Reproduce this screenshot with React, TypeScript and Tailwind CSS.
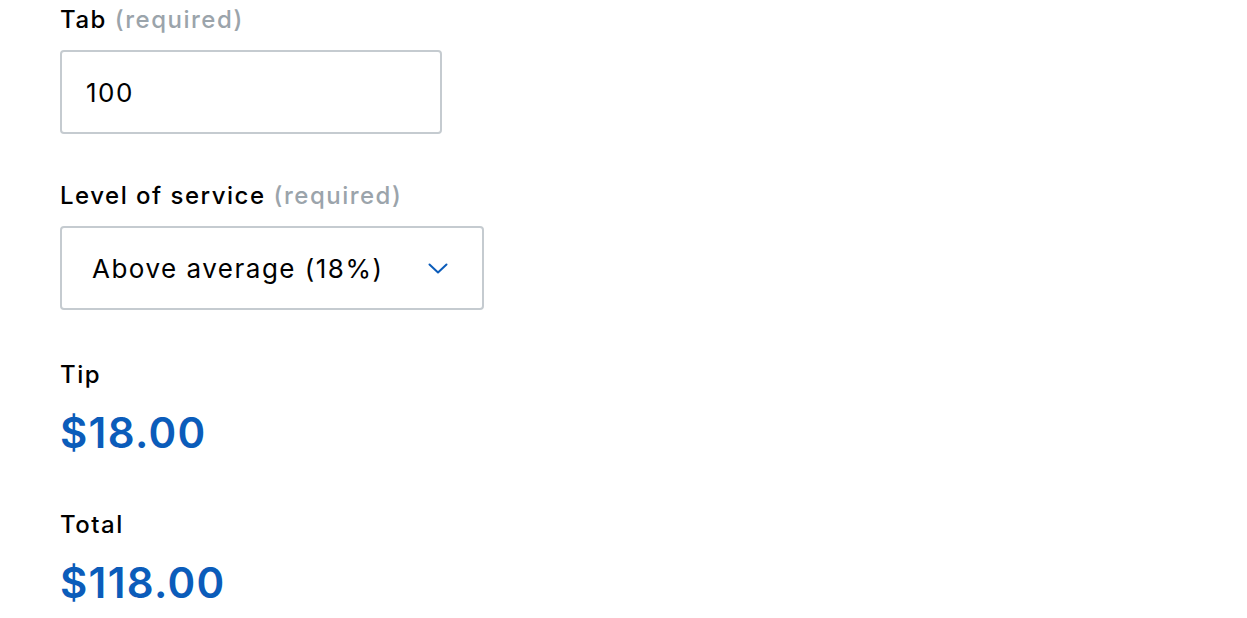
const font = { fontFamily: 'Inter, "Liberation Sans", sans-serif' };

function Label({ text }: { text: string }) {
  return (
    <label className="block text-[24px] leading-[32px] font-medium tracking-[1.5px] text-black mb-[14px]">
      {text} <span className="text-[#9ba4ab]">(required)</span>
    </label>
  );
}

function Chevron() {
  return (
    <svg width="20" height="11" viewBox="0 0 20 11" fill="none" className="shrink-0">
      <path d="M1.5 1.5l8.5 8 8.5-8" stroke="#0b5cba" strokeWidth="2" strokeLinecap="round" strokeLinejoin="round" />
    </svg>
  );
}

export default function App() {
  return (
    <div className="min-h-screen bg-white pl-[60px] pt-[4px]" style={font}>
      <Label text="Tab" />
      <input
        defaultValue="100"
        className="block w-[382px] h-[84px] border-2 border-[#c5cbd0] rounded-[4px] px-[24px] text-[26px] tracking-[1.5px] text-black outline-none"
      />

      <div className="mt-[46px]">
        <Label text="Level of service" />
        <div className="flex items-center justify-between w-[424px] h-[84px] border-2 border-[#c5cbd0] rounded-[4px] pl-[30px] pr-[34px] text-[26px] tracking-[1.5px] text-black">
          <span>Above average (18%)</span>
          <Chevron />
        </div>
      </div>

      <div className="mt-[49px]">
        <div className="text-[24px] leading-[32px] font-medium tracking-[1.5px] text-black">Tip</div>
        <div className="mt-[16px] text-[42px] leading-[52px] font-semibold tracking-[1.3px] text-[#0b5cba]">$18.00</div>
      </div>

      <div className="mt-[50px]">
        <div className="text-[24px] leading-[32px] font-medium tracking-[1.5px] text-black">Total</div>
        <div className="mt-[16px] text-[42px] leading-[52px] font-semibold tracking-[1.3px] text-[#0b5cba]">$118.00</div>
      </div>
    </div>
  );
}
